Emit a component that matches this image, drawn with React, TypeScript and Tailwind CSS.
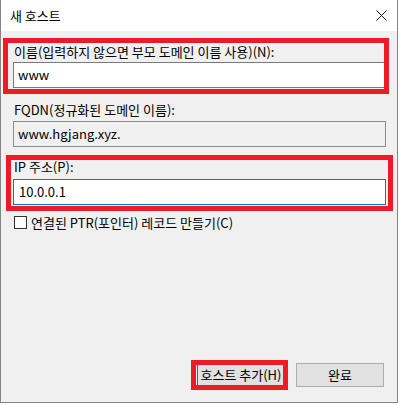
import React from "react";

const font = { fontFamily: '"Noto Sans CJK KR", "Noto Sans", sans-serif' };

const RedBox = ({ className }: { className: string }) => (
  <div className={`pointer-events-none absolute border-[5px] border-[#ed1c24] ${className}`} />
);

export default function App() {
  return (
    <div className="relative w-[401px] h-[405px] overflow-hidden bg-white text-[13px] text-black" style={font}>
      <div className="flex h-[403px] w-[398px] flex-col border-x border-b border-[#858585] bg-[#f0f0f0]">
        {/* title bar */}
        <div className="flex h-[31px] shrink-0 items-center justify-between bg-white pl-[9px] pr-[9px]">
          <span className="leading-4">새 호스트</span>
          <svg width="11" height="11" viewBox="0 0 11 11" className="mr-[1px]">
            <path d="M0.5 0.5 L10.5 10.5 M10.5 0.5 L0.5 10.5" stroke="#111" strokeWidth="1" fill="none" />
          </svg>
        </div>

        {/* body */}
        <div className="flex flex-1 flex-col pl-[12px] pr-[11px] pt-[13px] pb-[15px]">
          <label className="ml-[1px] h-4 leading-4">이름(입력하지 않으면 부모 도메인 이름 사용)(N):</label>
          <div className="mt-[2px] flex h-[26px] w-[373px] items-center border border-[#7a7a7a] bg-white pl-[4px] leading-4">
            www
          </div>

          <label className="ml-[1px] mt-[14px] h-4 leading-4">FQDN(정규화된 도메인 이름):</label>
          <div className="mt-[3px] flex h-[26px] w-[373px] items-center border border-[#8c8c8c] bg-[#f0f0f0] pl-[4px] leading-4">
            www.hgjang.xyz.
          </div>

          <label className="ml-[1px] mt-[12px] h-4 leading-4">IP 주소(P):</label>
          <div className="mt-[4px] flex h-[26px] w-[373px] items-center border border-[#0078d7] bg-white pl-[5px] leading-4">
            10.0.0.1
          </div>

          <div className="ml-[1px] mt-[11px] flex h-[13px] items-center gap-[4px]">
            <span className="h-[13px] w-[13px] border border-[#333] bg-white" />
            <span className="leading-4">연결된 PTR(포인터) 레코드 만들기(C)</span>
          </div>

          <div className="mt-auto flex justify-end gap-[11px] pr-[2px]">
            <button className="flex h-[24px] w-[88px] items-center justify-center border border-[#0078d7] bg-[#e1e1e1] leading-4">
              호스트 추가(H)
            </button>
            <button className="flex h-[24px] w-[88px] items-center justify-center border border-[#adadad] bg-[#e1e1e1] leading-4">
              완료
            </button>
          </div>
        </div>
      </div>

      <RedBox className="left-[3px] top-[38px] h-[56px] w-[386px]" />
      <RedBox className="left-[6px] top-[155px] h-[56px] w-[387px]" />
      <RedBox className="left-[191px] top-[360px] h-[30px] w-[97px]" />
    </div>
  );
}
